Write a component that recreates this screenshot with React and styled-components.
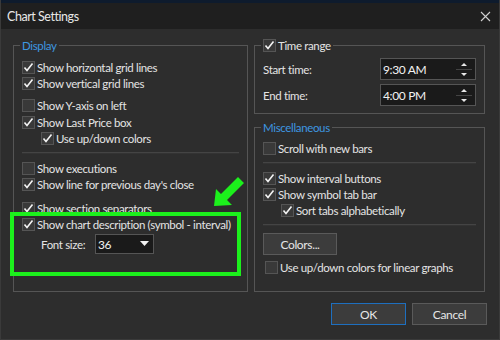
import React from 'react';
import styled, { createGlobalStyle } from 'styled-components';

const GlobalStyle = createGlobalStyle`
    html, body {
        margin: 0;
        padding: 0;
        background: #2d2d2d;
    }

    body {
        font-family: Lato, "Liberation Sans", sans-serif;
        font-size: 11.5px;
        letter-spacing: -0.35px;
        color: #e4e4e4;
    }
`;

const Window = styled.div`
    width: 500px;
    height: 340px;
    box-sizing: border-box;
    display: flex;
    flex-direction: column;
    background: #2d2d2d;
    border: 1px solid #3a3a3a;
    border-top: 0;
    overflow: hidden;
`;

const TopStrip = styled.div`
    height: 3px;
    margin: 0 -1px;
    background: #0e1b2d;
`;

const TitleBar = styled.div`
    height: 26px;
    display: flex;
    align-items: center;
    justify-content: space-between;
    padding: 0 9px 0 7px;
    background: #1f1f1f;
    margin: 0 -1px;

    h1 {
        margin: 0;
        font-size: 12.5px;
        letter-spacing: -0.45px;
        font-weight: 400;
        color: #e8e8e8;
    }
`;

const Body = styled.div`
    display: grid;
    grid-template-columns: 235px 231px;
    column-gap: 6px;
    padding: 16px 0 0 12px;
`;

const Column = styled.div`
    display: flex;
    flex-direction: column;
    gap: 13px;
`;

const GroupBox = styled.div`
    position: relative;
    box-sizing: border-box;
    height: ${p => p.height}px;
    border: 1px solid #555;
    padding: ${p => p.pad || '13px 8px 0 8px'};
    display: flex;
    flex-direction: column;
`;

const Legend = styled.div`
    position: absolute;
    top: -8px;
    left: 6px;
    padding: 0 2px;
    height: 15px;
    display: flex;
    align-items: center;
    gap: 2px;
    background: #2d2d2d;
    color: ${p => p.plain ? '#e4e4e4' : '#3d97e0'};
    line-height: 15px;
`;

const Row = styled.label`
    height: 16px;
    display: flex;
    align-items: center;
    gap: 2px;
    margin-left: ${p => p.indent || 0}px;
    margin-top: ${p => p.gap || 0}px;
    white-space: nowrap;
`;

const Box = styled.span`
    width: 13px;
    height: 13px;
    box-sizing: border-box;
    flex: none;
    border: 1px solid #555;
    background: #393939;
    display: flex;
    align-items: center;
    justify-content: center;
`;

const Separator = styled.div`
    height: 1px;
    background: #444;
    border-bottom: 1px solid #333;
    margin: ${p => p.margin || '6px 0 6px 0'};
`;

const FontRow = styled.div`
    display: flex;
    align-items: center;
    margin: 2px 0 0 19px;

    span {
        width: 54px;
    }
`;

const Select = styled.div`
    width: 59px;
    height: 20px;
    box-sizing: border-box;
    border: 1px solid #555;
    background: #1a1a1a;
    display: flex;
    align-items: center;
    justify-content: space-between;
    padding: 0 4px 0 2px;
    color: #f2f2f2;
    font-size: 12px;
`;

const Highlight = styled.div`
    position: absolute;
    left: -4px;
    top: 166px;
    width: 231px;
    height: 64px;
    box-sizing: border-box;
    border: 4px solid #1cf01c;
    pointer-events: none;
`;

const Arrow = styled.svg`
    position: absolute;
    left: 196px;
    top: 130px;
`;

const TimeGrid = styled.div`
    display: grid;
    grid-template-columns: 1fr 96px;
    row-gap: 4px;
    align-items: center;
`;

const Spin = styled.div`
    height: 22px;
    box-sizing: border-box;
    border: 1px solid #555;
    background: #1a1a1a;
    display: flex;
    align-items: center;
    justify-content: space-between;
    padding: 0 2px;
    color: #f2f2f2;
    font-size: 12px;
`;

const Button = styled.button`
    width: ${p => p.width || 75}px;
    height: 22px;
    box-sizing: border-box;
    border: 1px solid ${p => p.primary ? '#1e6fbf' : '#5a5a5a'};
    background: #3c3c3c;
    color: #e6e6e6;
    font-family: inherit;
    font-size: 12px;
    letter-spacing: inherit;
    padding: 0;
`;

const Footer = styled.div`
    display: flex;
    justify-content: flex-end;
    gap: 6px;
    padding: 11px 12px 0 0;
`;

const Check = ({ on }) => (
    <Box>
        {on && (
            <svg width="11" height="11" viewBox="0 0 11 11">
                <polyline points="1.5,5.5 4,8.5 9.5,1.5" fill="none" stroke="#f4f4f4" strokeWidth="1.6" />
            </svg>
        )}
    </Box>
);

const CheckRow = ({ on, children, ...rest }) => (
    <Row {...rest}>
        <Check on={on} />
        <span>{children}</span>
    </Row>
);

const SpinArrows = () => (
    <svg width="18" height="18" viewBox="0 0 18 18">
        <polygon points="9,3 12,6 6,6" fill="#e8e8e8" />
        <line x1="1" y1="9.5" x2="17" y2="9.5" stroke="#444" />
        <polygon points="6,13 12,13 9,16" fill="#e8e8e8" />
    </svg>
);

const App = () => (
    <>
        <GlobalStyle />
        <Window>
            <TopStrip />
            <TitleBar>
                <h1>Chart Settings</h1>
                <svg width="11" height="11" viewBox="0 0 11 11">
                    <path d="M1 1 L10 10 M10 1 L1 10" stroke="#d0d0d0" strokeWidth="1.1" />
                </svg>
            </TitleBar>
            <Body>
                <GroupBox height={247}>
                    <Legend>Display</Legend>
                    <CheckRow on>Show horizontal grid lines</CheckRow>
                    <CheckRow on>Show vertical grid lines</CheckRow>
                    <CheckRow gap={6}>Show Y-axis on left</CheckRow>
                    <CheckRow on gap={1}>Show Last Price box</CheckRow>
                    <CheckRow on indent={19}>Use up/down colors</CheckRow>
                    <Separator />
                    <CheckRow>Show executions</CheckRow>
                    <CheckRow on>Show line for previous day's close</CheckRow>
                    <CheckRow on gap={8}>Show section separators</CheckRow>
                    <CheckRow on>Show chart description (symbol - interval)</CheckRow>
                    <FontRow>
                        <span>Font size:</span>
                        <Select>
                            36
                            <svg width="9" height="6" viewBox="0 0 9 6">
                                <polygon points="0,0 9,0 4.5,5" fill="#f2f2f2" />
                            </svg>
                        </Select>
                    </FontRow>
                    <Highlight />
                    <Arrow width="36" height="32" viewBox="0 0 36 32">
                        <polygon points="4,30 6,13 11,18 28,1 34,7 17,24 22,29" fill="#1cf01c" />
                    </Arrow>
                </GroupBox>
                <Column>
                    <GroupBox height={69} pad="12px 8px 0 8px">
                        <Legend plain>
                            <Check on />
                            <span>Time range</span>
                        </Legend>
                        <TimeGrid>
                            <span>Start time:</span>
                            <Spin>9:30 AM<SpinArrows /></Spin>
                            <span>End time:</span>
                            <Spin>4:00 PM<SpinArrows /></Spin>
                        </TimeGrid>
                    </GroupBox>
                    <GroupBox height={165} pad="12px 8px 0 8px">
                        <Legend>Miscellaneous</Legend>
                        <CheckRow>Scroll with new bars</CheckRow>
                        <Separator />
                        <CheckRow on>Show interval buttons</CheckRow>
                        <CheckRow on>Show symbol tab bar</CheckRow>
                        <CheckRow on indent={18}>Sort tabs alphabetically</CheckRow>
                        <Separator margin="6px 0 7px 0" />
                        <Button width={74}>Colors...</Button>
                        <CheckRow gap={4} indent={2}>Use up/down colors for linear graphs</CheckRow>
                    </GroupBox>
                </Column>
            </Body>
            <Footer>
                <Button primary>OK</Button>
                <Button>Cancel</Button>
            </Footer>
        </Window>
    </>
);

export default App;
